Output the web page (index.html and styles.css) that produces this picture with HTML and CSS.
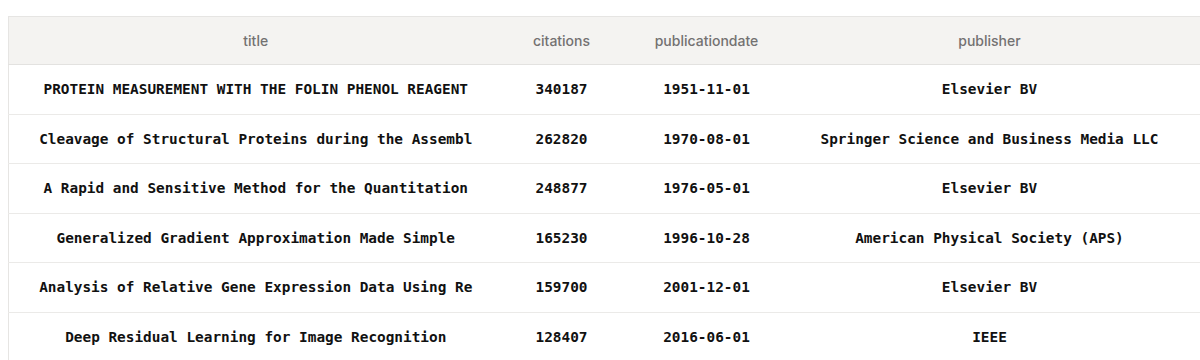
FILE: index.html
```html
<!DOCTYPE html>
<html>
<head>
<meta charset="utf-8">
<link rel="stylesheet" href="styles.css">
</head>
<body>
<div class="wrap">
<table class="grid">
  <colgroup>
    <col class="c-title"><col class="c-cit"><col class="c-date"><col class="c-pub">
  </colgroup>
  <thead>
    <tr><th>title</th><th>citations</th><th>publicationdate</th><th class="last">publisher</th></tr>
  </thead>
  <tbody>
    <tr><td>PROTEIN MEASUREMENT WITH THE FOLIN PHENOL REAGENT</td><td>340187</td><td>1951-11-01</td><td class="last">Elsevier BV</td></tr>
    <tr><td>Cleavage of Structural Proteins during the Assembl</td><td>262820</td><td>1970-08-01</td><td class="last">Springer Science and Business Media LLC</td></tr>
    <tr><td>A Rapid and Sensitive Method for the Quantitation</td><td>248877</td><td>1976-05-01</td><td class="last">Elsevier BV</td></tr>
    <tr><td>Generalized Gradient Approximation Made Simple</td><td>165230</td><td>1996-10-28</td><td class="last">American Physical Society (APS)</td></tr>
    <tr><td>Analysis of Relative Gene Expression Data Using Re</td><td>159700</td><td>2001-12-01</td><td class="last">Elsevier BV</td></tr>
    <tr><td>Deep Residual Learning for Image Recognition</td><td>128407</td><td>2016-06-01</td><td class="last">IEEE</td></tr>
  </tbody>
</table>
</div>
</body>
</html>
```
FILE: styles.css
```css
html, body { margin: 0; padding: 0; background: #ffffff; }
.wrap { padding: 16px 0 0 8px; overflow: hidden; }
.grid {
  border-collapse: collapse;
  table-layout: fixed;
  width: 1206px;
  border-top: 1px solid #e6e5e3;
  border-left: 1px solid #e6e5e3;
}
.c-title { width: 494px; }
.c-cit { width: 118px; }
.c-date { width: 172px; }
.c-pub { width: 422px; }
.grid th {
  background: #f4f3f1;
  color: #737171;
  font-family: Inter, "Open Sans", sans-serif;
  font-weight: 500;
  font-size: 14px;
  height: 47px;
  padding: 0;
  text-align: center;
  border-bottom: 1px solid #e3e2e0;
}
.grid td {
  font-family: "DejaVu Sans Mono", "Liberation Mono", monospace;
  font-weight: bold;
  font-size: 14.4px;
  color: #111111;
  height: 48.5px;
  padding: 0;
  text-align: center;
  white-space: nowrap;
  border-bottom: 1px solid #ebeae8;
}
.grid .last { padding-right: 28px; }
```
